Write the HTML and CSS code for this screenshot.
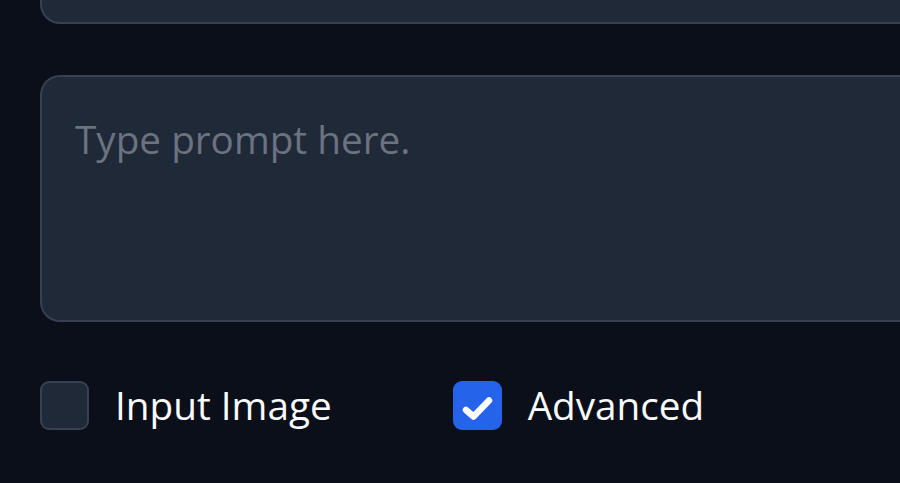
FILE: index.html
```html
<!DOCTYPE html>
<html>
<head>
<meta charset="utf-8">
<link rel="stylesheet" href="styles.css">
</head>
<body>
<div class="page">
  <div class="top-box"></div>
  <div class="prompt">
    <div class="placeholder">Type prompt here.</div>
  </div>
  <div class="options">
    <label class="option">
      <span class="box"></span>
      <span class="label">Input Image</span>
    </label>
    <label class="option">
      <span class="box checked">
        <svg viewBox="0 0 49 49" width="49" height="49"><path d="M13 29 L20.5 35.5 L36 19.5" fill="none" stroke="#fff" stroke-width="6.5" stroke-linecap="round" stroke-linejoin="round"/></svg>
      </span>
      <span class="label">Advanced</span>
    </label>
  </div>
</div>
</body>
</html>
```
FILE: styles.css
```css
html, body {
  margin: 0;
  padding: 0;
  background: #0b0f19;
  overflow: hidden;
  width: 900px;
  height: 483px;
}
.page {
  padding-left: 40px;
  overflow: hidden;
  height: 483px;
  font-family: "Open Sans", "Noto Sans", sans-serif;
}
.top-box {
  width: 900px;
  height: 22px;
  background: #1f2937;
  border: 2px solid #374151;
  border-top: none;
  border-right: none;
  border-radius: 0 0 0 20px;
}
.prompt {
  margin-top: 51px;
  width: 880px;
  height: 247px;
  box-sizing: border-box;
  background: #1f2937;
  border: 2px solid #374151;
  border-right: none;
  border-radius: 20px 0 0 20px;
  padding: 43px 33px;
}
.placeholder {
  color: #6b7280;
  font-size: 38.7px;
  line-height: 1;
}
.options {
  display: flex;
  margin-top: 59px;
  gap: 121px;
}
.option {
  display: flex;
  align-items: center;
  gap: 26px;
}
.box {
  width: 49px;
  height: 49px;
  box-sizing: border-box;
  border-radius: 9px;
  background: #1f2937;
  border: 2px solid #374151;
  display: block;
}
.box.checked {
  background: #2563eb;
  border: none;
}
.box svg { display: block; }
.label {
  color: #f9fafb;
  font-size: 38.7px;
  line-height: 1;
}
```
